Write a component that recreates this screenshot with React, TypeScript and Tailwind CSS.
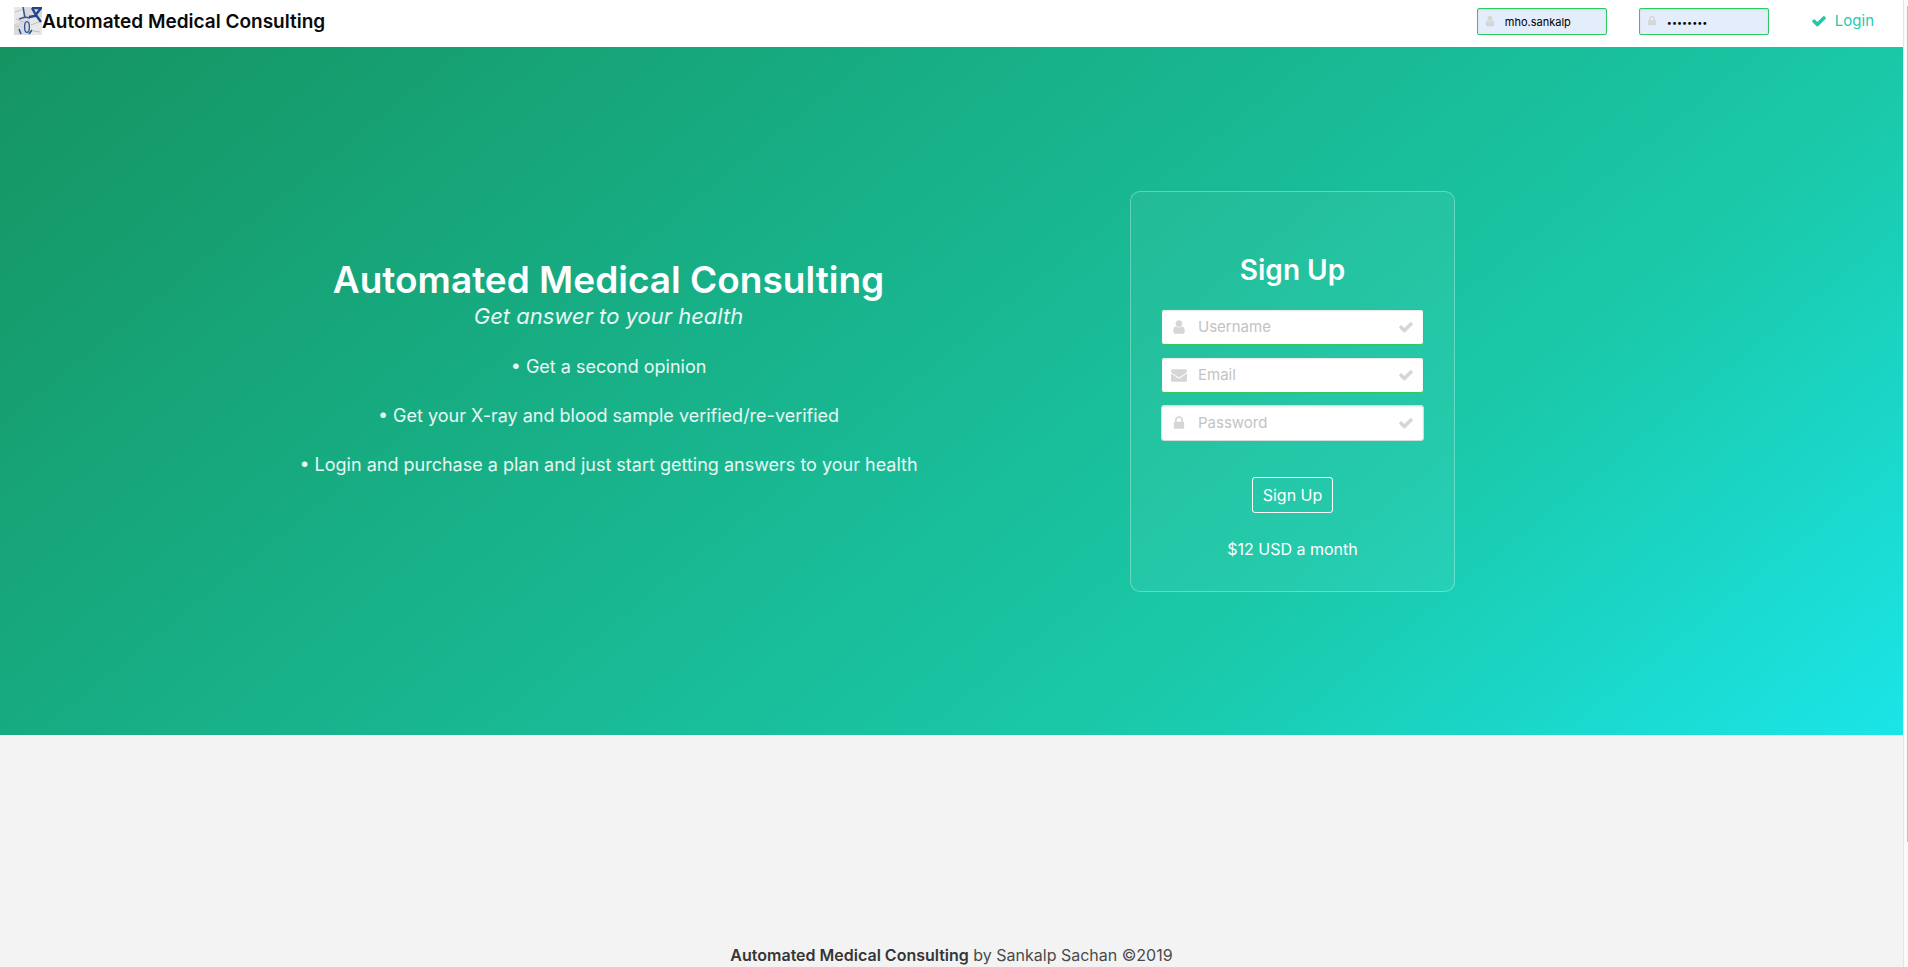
const iconPaths = {
  check:
    "M1671 566q0 40-28 68l-724 724-136 136q-28 28-68 28t-68-28l-136-136-362-362q-28-28-28-68t28-68l136-136q28-28 68-28t68 28l294 295 656-657q28-28 68-28t68 28l136 136q28 28 28 68z",
  user:
    "M1536 1399q0 109-62.5 187t-150.5 78h-854q-88 0-150.5-78t-62.5-187q0-85 8.5-160.5t31.5-152 58.5-131 94-89 134.5-34.5q131 128 313 128t313-128q76 0 134.5 34.5t94 89 58.5 131 31.5 152 8.5 160.5zm-256-887q0 159-112.5 271.5t-271.5 112.5-271.5-112.5-112.5-271.5 112.5-271.5 271.5-112.5 271.5 112.5 112.5 271.5z",
  lock:
    "M640 768h512v-192q0-106-75-181t-181-75-181 75-75 181v192zm832 96v576q0 40-28 68t-68 28h-960q-40 0-68-28t-28-68v-576q0-40 28-68t68-28h32v-192q0-184 132-316t316-132 316 132 132 316v192h32q40 0 68 28t28 68z",
  envelope:
    "M1792 710v794q0 66-47 113t-113 47h-1472q-66 0-113-47t-47-113v-794q44 49 101 87 362 246 497 345 57 42 92.5 65.5t94.5 48 110 24.5h2q51 0 110-24.5t94.5-48 92.5-65.5q170-123 498-345 57-39 100-87zm0-294q0 79-49 151t-122 123q-376 261-468 325-10 7-42.5 31t-54 38.8-52 33.2-57.5 27.5-50 9.5h-2q-23 0-50-9.5t-57.5-27.5-52-33.2-54-38.8-42.5-31q-91-64-262-182.5t-205-142.5q-62-42-117-115.5t-55-136.5q0-78 41.5-130t118.5-52h1472q65 0 112.5 47t47.5 113z",
};

type IconName = keyof typeof iconPaths;

function Icon({ name, className }: { name: IconName; className: string }) {
  return (
    <svg viewBox="0 0 1792 1792" className={`fill-current ${className}`} aria-hidden="true">
      <path d={iconPaths[name]} />
    </svg>
  );
}

function Logo() {
  return (
    <svg viewBox="0 0 28 28" className="size-7 shrink-0" aria-hidden="true">
      <rect width="28" height="28" fill="#d9dadd" />
      <path d="M0 0h9l1 9-4 6-6 2zM16 12l12-2v18H15z" fill="#e9e8e8" />
      <path d="M1 5l6-2M2 12l7 3M17 18l8-3M19 24l7 1M1 19l4 1" stroke="#bfc0c4" strokeWidth="1" />
      <path d="M9 0l2 11M5 12l6-2 5 1" stroke="#3c5690" strokeWidth="1.6" fill="none" />
      <ellipse cx="13" cy="20" rx="2.4" ry="5.4" stroke="#28539b" strokeWidth="1.3" fill="none" />
      <path d="M5 22l2 5M18 23l-3 4" stroke="#28539b" strokeWidth="1.6" />
      <path d="M15 10l6-1 6-8M18 1l4 7 5 7M18 1h10" stroke="#24448c" strokeWidth="2.4" fill="none" />
    </svg>
  );
}

type NavFieldProps = { id: string; label: string; type: string; value: string; icon: IconName; size: string };

function NavField({ id, label, type, value, icon, size }: NavFieldProps) {
  return (
    <div className="relative w-[130px]">
      <label htmlFor={id} className="sr-only">{label}</label>
      <input
        id={id}
        type={type}
        defaultValue={value}
        className={`block h-[27px] w-full rounded-xs border border-[#2fc962] bg-[#e4edfb] pt-0.5 pr-2 pl-[27px] text-black shadow-[inset_0_1px_2px_rgba(10,10,10,0.1)] outline-none ${size}`}
      />
      <span className="pointer-events-none absolute inset-y-0 left-0 flex w-[27px] items-center justify-center text-[#d6d6d6]">
        <Icon name={icon} className="size-3" />
      </span>
    </div>
  );
}

type FieldProps = { id: string; label: string; type: string; border: string; icon: IconName };

function Field({ id, label, type, border, icon }: FieldProps) {
  return (
    <div className="relative">
      <label htmlFor={id} className="sr-only">{label}</label>
      <input
        id={id}
        type={type}
        placeholder={label}
        className={`block h-9 w-full rounded-[3px] border bg-white px-9 text-[15px] leading-6 text-[#363636] shadow-[inset_0_1px_2px_rgba(10,10,10,0.1)] outline-none placeholder:text-[#c3c3c3] ${border}`}
      />
      <span className="pointer-events-none absolute inset-y-0 left-0 flex w-9 items-center justify-center text-[#d6d6d6]">
        <Icon name={icon} className="size-4" />
      </span>
      <span className="pointer-events-none absolute inset-y-0 right-0 flex w-9 items-center justify-center text-[#d6d6d6]">
        <Icon name="check" className="size-4" />
      </span>
    </div>
  );
}

export default function App() {
  return (
    <div className="flex h-screen overflow-hidden bg-[#f3f3f3] font-['Inter',sans-serif] text-[#4a4a4a]">
      <div className="flex min-w-0 flex-1 flex-col">
        <header className="flex h-[47px] shrink-0 items-start justify-between bg-white pr-[29px] pl-[14px]">
          <div className="flex h-[42px] items-center">
            <Logo />
            <span className="pt-0.5 text-[19px] leading-7 font-semibold text-[#0a0a0a]">Automated Medical Consulting</span>
          </div>
          <form className="flex h-[42px] items-center gap-8" onSubmit={(e) => e.preventDefault()}>
            <NavField id="login-user" label="Username" type="text" value="mho.sankalp" icon="user" size="text-[11px] leading-5" />
            <NavField id="login-pass" label="Password" type="password" value="password" icon="lock" size="text-[9px] leading-5" />
            <button type="submit" className="ml-2.5 flex items-center gap-2 text-[15px] leading-6 text-[#1ecaae]">
              <Icon name="check" className="size-4" />
              <span>Login</span>
            </button>
          </form>
        </header>

        <main className="flex min-h-[688px] shrink-0 items-center justify-center bg-[linear-gradient(141deg,#159462_0%,#1ac9a9_71%,#1be5e8_100%)] pr-0.5 text-white">
          <div className="grid w-full max-w-[1368px] grid-cols-2 items-center">
            <section className="pb-[46px] text-center">
              <h1 className="text-[37px] leading-[45px] font-semibold">Automated Medical Consulting</h1>
              <p className="text-[22px] leading-7 text-white/90 italic">Get answer to your health</p>
              <ul className="mt-[22px] space-y-[19px] text-lg leading-[30px] text-white/90">
                <li>• Get a second opinion</li>
                <li>• Get your X-ray and blood sample verified/re-verified</li>
                <li>• Login and purchase a plan and just start getting answers to your health</li>
              </ul>
            </section>

            <section className="mx-auto w-[325px] rounded-[10px] border border-white/30 bg-white/5 px-[30px] pt-[60px] pb-[30px] text-center">
              <h2 className="text-[28px] leading-9 font-semibold">Sign Up</h2>
              <form onSubmit={(e) => e.preventDefault()}>
                <div className="mt-[21px] space-y-3">
                  <Field id="new-user" label="Username" type="text" border="border-[#2fc962]" icon="user" />
                  <Field id="new-email" label="Email" type="email" border="border-[#2fc962]" icon="envelope" />
                  <Field id="new-pass" label="Password" type="password" border="border-[#dbdbdb]" icon="lock" />
                </div>
                <button type="submit" className="mt-9 h-9 rounded-[3px] border border-white px-2.5 text-base text-white">Sign Up</button>
              </form>
              <p className="mt-6 text-base leading-6">$12 USD a month</p>
            </section>
          </div>
        </main>

        <footer className="mt-auto shrink-0 text-center text-base leading-6">
          <strong className="font-semibold text-[#363636]">Automated Medical Consulting</strong> by Sankalp Sachan ©2019
        </footer>
      </div>
      <div className="w-[5px] border-l border-[#e4e4e4] bg-[#fafafa] pt-1.5 pl-[3px]" aria-hidden="true">
        <div className="h-[87%] w-px bg-[#c1c1c1]" />
      </div>
    </div>
  );
}
